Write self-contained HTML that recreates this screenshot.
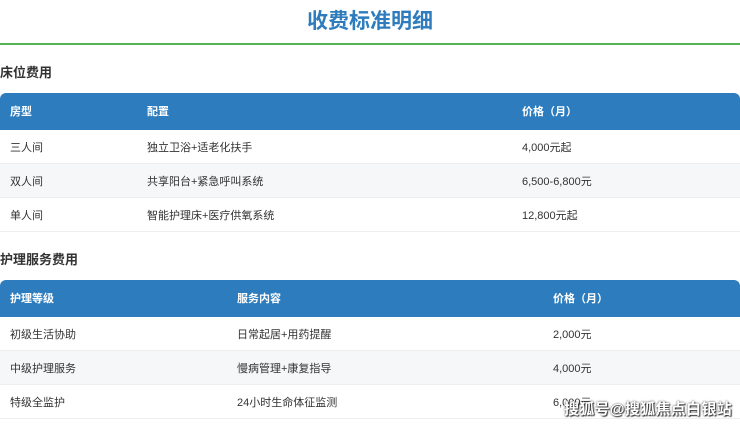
<!DOCTYPE html>
<html><head><meta charset="utf-8"><style>
body{margin:0;width:740px;height:426px;overflow:hidden;background:#fff;font-family:"Liberation Sans","Noto Sans CJK SC",sans-serif;color:#333;position:relative}
.title{position:absolute;top:9px;left:0;width:740px;text-align:center;font-size:21px;font-weight:bold;color:#2e7cbd;line-height:26px}
.line{position:absolute;top:43px;left:0;width:740px;height:2px;background:#52b452}
.sec{position:absolute;left:0;font-size:13px;font-weight:bold;color:#333}
.tb{position:absolute;left:0;width:740px}
.hd{height:37px;background:#2d7dbe;border-radius:6px 6px 0 0;color:#fff;font-weight:bold;font-size:11px;position:relative}
.r{height:33px;border-bottom:1px solid #eceef0;font-size:11px;position:relative}
.r.g{background:#f6f7f9}
.c{position:absolute;top:1px;line-height:37px;white-space:nowrap}
.r .c{line-height:33px;top:2px}
.wm{position:absolute;left:564px;top:398px;font-size:15px;font-weight:bold;color:#fff;text-shadow:0 0 2px #333,1px 1px 1px #333;letter-spacing:0.3px}
</style></head><body>
<div class="title">收费标准明细</div>
<div class="line"></div>
<div class="sec" style="top:62px">床位费用</div>
<div class="tb" style="top:93px">
<div class="hd"><span class="c" style="left:10px">房型</span><span class="c" style="left:147px">配置</span><span class="c" style="left:522px">价格（月）</span></div>
<div class="r"><span class="c" style="left:10px">三人间</span><span class="c" style="left:147px">独立卫浴+适老化扶手</span><span class="c" style="left:522px">4,000元起</span></div>
<div class="r g"><span class="c" style="left:10px">双人间</span><span class="c" style="left:147px">共享阳台+紧急呼叫系统</span><span class="c" style="left:522px">6,500-6,800元</span></div>
<div class="r"><span class="c" style="left:10px">单人间</span><span class="c" style="left:147px">智能护理床+医疗供氧系统</span><span class="c" style="left:522px">12,800元起</span></div>
</div>
<div class="sec" style="top:249px">护理服务费用</div>
<div class="tb" style="top:280px">
<div class="hd"><span class="c" style="left:10px">护理等级</span><span class="c" style="left:237px">服务内容</span><span class="c" style="left:553px">价格（月）</span></div>
<div class="r"><span class="c" style="left:10px">初级生活协助</span><span class="c" style="left:237px">日常起居+用药提醒</span><span class="c" style="left:553px">2,000元</span></div>
<div class="r g"><span class="c" style="left:10px">中级护理服务</span><span class="c" style="left:237px">慢病管理+康复指导</span><span class="c" style="left:553px">4,000元</span></div>
<div class="r"><span class="c" style="left:10px">特级全监护</span><span class="c" style="left:237px">24小时生命体征监测</span><span class="c" style="left:553px">6,000元</span></div>
</div>
<div class="wm">搜狐号@搜狐焦点白银站</div>
</body></html>
